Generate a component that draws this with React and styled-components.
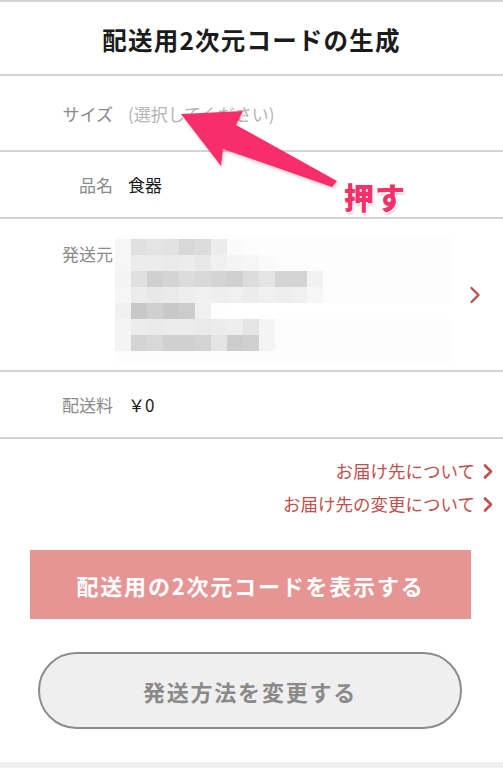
import React from 'react'
import styled, { createGlobalStyle } from 'styled-components'

const GlobalStyle = createGlobalStyle`
  html, body {
    margin: 0;
    padding: 0;
    background: #ffffff;
  }
  body {
    font-family: 'Hiragino Kaku Gothic ProN', 'Noto Sans CJK JP', 'Noto Sans', sans-serif;
    color: #1b1b1b;
  }
`

const Page = styled.div`
  position: relative;
  width: 503px;
  height: 768px;
  overflow: hidden;
  display: flex;
  flex-direction: column;
  border-top: 2px solid #d4d4d4;
  box-sizing: border-box;
`

const Title = styled.h1`
  margin: 0;
  height: 74px;
  display: flex;
  align-items: center;
  justify-content: center;
  font-size: 24.5px;
  font-weight: 700;
  letter-spacing: 1.2px;
  border-bottom: 2px solid #d4d4d4;
  box-sizing: border-box;
  padding-top: 2px;
`

const Row = styled.div`
  display: flex;
  align-items: ${(p) => (p.top ? 'flex-start' : 'center')};
  height: ${(p) => p.h}px;
  border-bottom: 2px solid #d4d4d4;
  box-sizing: border-box;
  padding-right: 22px;
`

const Label = styled.div`
  width: 113px;
  flex-shrink: 0;
  text-align: right;
  font-size: 17px;
  color: #8a8a8a;
  margin-right: 15px;
  margin-top: ${(p) => p.mt || 0}px;
`

const Value = styled.div`
  font-size: 17px;
  color: ${(p) => (p.muted ? '#b4b4b4' : '#1b1b1b')};
  flex: 1;
  margin-top: ${(p) => p.mt || 0}px;
`

const Mosaic = styled.svg`
  display: block;
  margin-left: -13px;
`

const Chevron = styled.svg`
  flex-shrink: 0;
  align-self: center;
`

const Links = styled.div`
  display: flex;
  flex-direction: column;
  align-items: flex-end;
  gap: 9px;
  padding: 20px 10px 0 0;
`

const LinkItem = styled.a`
  display: flex;
  align-items: center;
  gap: 8px;
  font-size: 17.5px;
  color: #c0504d;
  text-decoration: none;
  line-height: 24px;
`

const PrimaryButton = styled.button`
  margin: 34px 32px 0 30px;
  height: 69px;
  border: none;
  background: #e59593;
  color: #ffffff;
  font-family: inherit;
  font-size: 22px;
  font-weight: 700;
  letter-spacing: 1.8px;
`

const SecondaryButton = styled.button`
  margin: 33px 41px 0 38px;
  height: 77px;
  border: 2px solid #8c8c8c;
  border-radius: 40px;
  background: #efefef;
  color: #8a8a8a;
  font-family: inherit;
  font-size: 22px;
  font-weight: 700;
  letter-spacing: 1.8px;
`

const BottomBand = styled.div`
  margin-top: auto;
  height: 6px;
  background: #f0f0f0;
`

const Overlay = styled.svg`
  position: absolute;
  left: 0;
  top: 0;
  pointer-events: none;
`

const PushText = styled.div`
  position: absolute;
  left: 344px;
  top: 172px;
  font-size: 30px;
  font-weight: 900;
  color: #f5306b;
  letter-spacing: 1px;
  text-shadow: 0 0 2px #fff, 1px 1px 0 #fff, -1px -1px 0 #fff, 1px -1px 0 #fff,
    -1px 1px 0 #fff, 1px 2px 3px rgba(0, 0, 0, 0.25);
`

// pixelated address block (16px cells)
const MOSAIC = [
  ['f6', 'e0', 'e4', 'e2', 'd8', 'dc', 'ec', 'fa', 'fc', 'fd', 'fd', 'fd', 'fd', 'fd', 'fd', 'fd', 'fd', 'fd', 'fd', 'fd', 'fd'],
  ['f6', 'ec', 'ec', 'ea', 'ec', 'e8', 'f0', 'f4', 'f6', 'fa', 'fc', 'fc', 'fc', 'fd', 'fd', 'fd', 'fd', 'fd', 'fd', 'fd', 'fd'],
  ['f4', 'e0', 'd0', 'd4', 'dc', 'd8', 'd4', 'd0', 'dc', 'e4', 'd4', 'd4', 'f2', 'fc', 'fd', 'fd', 'fd', 'fd', 'fd', 'fd', 'fd'],
  ['f6', 'ec', 'e8', 'ea', 'ee', 'f0', 'ee', 'f0', 'ec', 'f0', 'ee', 'f0', 'f6', 'fc', 'fd', 'fd', 'fd', 'fd', 'fd', 'fd', 'fd'],
  ['f0', 'c8', 'd0', 'c8', 'cc', 'f0', 'fe', 'ff', 'ff', 'ff', 'ff', 'ff', 'ff', 'ff', 'ff', 'ff', 'ff', 'ff', 'ff', 'ff', 'ff'],
  ['f4', 'ec', 'ea', 'ec', 'ec', 'ea', 'ec', 'ee', 'e4', 'f4', 'fc', 'fd', 'fd', 'fd', 'fd', 'fd', 'fd', 'fd', 'fd', 'fd', 'fd'],
  ['f4', 'd4', 'd8', 'd0', 'd0', 'd4', 'e4', 'cc', 'd0', 'f4', 'fc', 'fd', 'fd', 'fd', 'fd', 'fd', 'fd', 'fd', 'fd', 'fd', 'fd'],
]

const AddressMosaic = () => (
  <Mosaic width="336" height="126" viewBox="0 0 336 126">
    <rect x="0" y="0" width="336" height="126" fill="#fdfdfd" />
    {MOSAIC.map((row, r) =>
      row.map((c, i) => (
        <rect key={r + '-' + i} x={i * 16} y={r * 16 + 3} width="16" height="16" fill={'#' + c + c + c} />
      ))
    )}
  </Mosaic>
)

const SmallChevron = ({ color = '#c0504d' }) => (
  <svg width="10" height="15" viewBox="0 0 10 15">
    <path d="M2 1.5 L8 7.5 L2 13.5" fill="none" stroke={color} strokeWidth="2.6" strokeLinecap="round" strokeLinejoin="round" />
  </svg>
)

const App = () => {
  return (
    <>
      <GlobalStyle />
      <Page>
        <Title>配送用2次元コードの生成</Title>
        <Row h={76}>
          <Label>サイズ</Label>
          <Value muted>(選択してください)</Value>
        </Row>
        <Row h={67}>
          <Label>品名</Label>
          <Value>食器</Value>
        </Row>
        <Row h={153} top>
          <Label mt={22}>発送元</Label>
          <Value mt={17}>
            <AddressMosaic />
          </Value>
          <Chevron width="12" height="18" viewBox="0 0 12 18">
            <path d="M2.5 2 L9.5 9 L2.5 16" fill="none" stroke="#b9514e" strokeWidth="2.4" strokeLinecap="round" strokeLinejoin="round" />
          </Chevron>
        </Row>
        <Row h={67}>
          <Label>配送料</Label>
          <Value>￥0</Value>
        </Row>
        <Links>
          <LinkItem href="#">
            お届け先について
            <SmallChevron />
          </LinkItem>
          <LinkItem href="#">
            お届け先の変更について
            <SmallChevron />
          </LinkItem>
        </Links>
        <PrimaryButton>配送用の2次元コードを表示する</PrimaryButton>
        <SecondaryButton>発送方法を変更する</SecondaryButton>
        <BottomBand />

        <Overlay width="503" height="768" viewBox="0 0 503 768">
          <defs>
            <filter id="sh" x="-20%" y="-20%" width="140%" height="140%">
              <feDropShadow dx="1" dy="2" stdDeviation="1.5" floodColor="#000" floodOpacity="0.2" />
            </filter>
          </defs>
          <polygon
            points="181,112 243,109 236,123 337,179 332,185 223,147 221,164"
            fill="#f72f6b"
            filter="url(#sh)"
          />
        </Overlay>
        <PushText>押す</PushText>
      </Page>
    </>
  )
}

export default App
